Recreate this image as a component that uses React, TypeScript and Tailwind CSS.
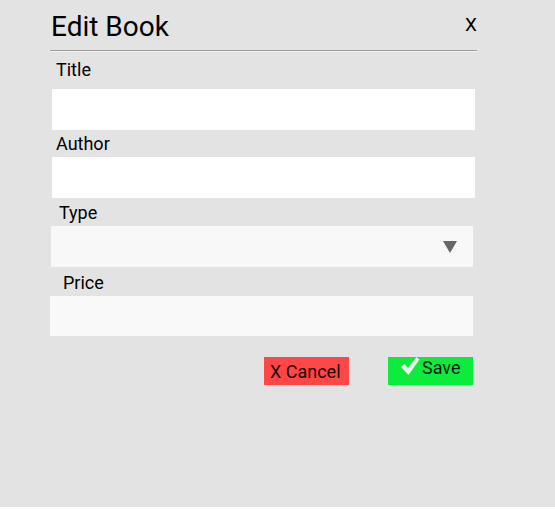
import React from "react";

export default function App() {
  return (
    <div className="w-full h-[507px] bg-[#e3e3e3] text-black" style={{ fontFamily: "Roboto, 'Noto Sans', sans-serif" }}>
      <div className="ml-[50px] w-[427px]">
        <div className="flex items-start justify-between pt-[10px]">
          <h2 className="text-[28px] leading-[33px] font-normal pl-px">Edit Book</h2>
          <button className="text-[19px] leading-[22px] mt-[4px]">X</button>
        </div>
        <div className="mt-[7px] border-t border-t-[#9c9c9c] border-b border-b-[#f2f2f2]" />
        <div className="pt-[7px] pl-[6px] text-[18px] leading-[21px]">Title</div>
        <input className="block mt-[9px] ml-[2px] w-[423px] h-[41px] bg-white outline-none" />
        <div className="pt-[3px] pl-[6px] text-[18px] leading-[21px]">Author</div>
        <input className="block mt-[3px] ml-[2px] w-[423px] h-[41px] bg-white outline-none" />
        <div className="pt-[4px] pl-[9px] text-[18px] leading-[21px]">Type</div>
        <div className="mt-[3px] ml-[1px] w-[422px] h-[41px] bg-[#f8f8f8] flex items-center justify-end pr-[16px]">
          <svg width="14" height="12" viewBox="0 0 14 12">
            <polygon points="0,0 14,0 7,12" fill="#666666" />
          </svg>
        </div>
        <div className="pt-[5px] pl-[13px] text-[18px] leading-[21px]">Price</div>
        <input className="block mt-[3px] w-[423px] h-[40px] bg-[#f9f9f9] outline-none" />
        <div className="mt-[21px] flex justify-end gap-[39px] pr-[4px]">
          <button className="w-[85px] h-[28px] bg-[#ff4747] flex items-center pl-[6px] text-[18px] leading-[21px] text-[#1a0000]">
            X Cancel
          </button>
          <button className="relative w-[85px] h-[28px] bg-[#0bec3c] flex items-start pt-0 pl-[34px] text-[18px] leading-[21px] text-[#001a05]">
            <svg className="absolute left-[12px] top-[-1px]" width="20" height="20" viewBox="0 0 20 20">
              <path d="M1 11 L4.5 8 L8 12 L16.5 1 L19.5 3.5 L8.5 19 Z" fill="#eef4ee" />
            </svg>
            <span className="relative">Save</span>
          </button>
        </div>
      </div>
    </div>
  );
}
